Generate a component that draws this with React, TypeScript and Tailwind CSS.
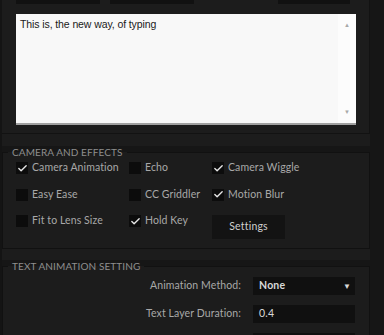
import { Check } from 'lucide-react';

const UI_FONT = "font-['Lato',sans-serif]";

function Box({ checked }: { checked?: boolean }) {
  return (
    <span className="flex h-[12px] w-[12px] shrink-0 items-center justify-center bg-[#0c0c0c]">
      {checked && <Check size={11} strokeWidth={3} className="text-[#e6e6e6]" />}
    </span>
  );
}

function Toggle({ label, checked }: { label: string; checked?: boolean }) {
  return (
    <div className="flex h-[26.5px] items-center gap-[4px]">
      <Box checked={checked} />
      <span className="whitespace-nowrap text-[10.5px] tracking-[0.1px] text-[#a8a8a8]">{label}</span>
    </div>
  );
}

function Field({ label, children }: { label: string; children: React.ReactNode }) {
  return (
    <div className="flex items-center">
      <span className="w-[238px] whitespace-nowrap text-right text-[10.5px] tracking-[0.1px] text-[#a8a8a8]">{label}</span>
      <div className="ml-[12px] flex h-[18px] w-[102px] items-center bg-[#101010] pl-[6px] pr-[4px] text-[10.5px] tracking-[0.2px] text-[#d8d8d8]">
        {children}
      </div>
    </div>
  );
}

export default function App() {
  return (
    <div className={`h-[335px] w-[384px] overflow-hidden bg-[#161616] ${UI_FONT}`}>
      <div className="flex w-[370px]">
        <div className="w-[2px] bg-[#141414]" />
        <div className="flex-1">
          {/* text panel */}
          <div className="h-[134px] border-b border-r border-[#121212] bg-[#1c1c1c]">
            <div className="flex h-[4px] pl-[14px]">
              <div className="w-[84px] bg-[#111]" />
              <div className="ml-[10px] w-[84px] bg-[#111]" />
              <div className="ml-[84px] w-[72px] bg-[#111]" />
            </div>
            <div className="ml-[14px] mt-[10px] flex h-[111px] w-[340px] border-b-2 border-[#a0a0a0] bg-[#f8f8f8]">
              <div className="flex-1 px-[4px] pt-[3px] font-['Liberation_Sans',sans-serif] text-[10.5px] tracking-[-0.1px] text-[#1a1a1a]">
                This is, the new way, of typing
              </div>
              <div className="flex w-[18px] flex-col items-center justify-between bg-[#fcfcfc] py-[8px]">
                <span className="text-[6px] leading-none text-[#a8a8a8]">▲</span>
                <span className="text-[6px] leading-none text-[#a8a8a8]">▼</span>
              </div>
            </div>
          </div>

          <div className="h-[12px] bg-[#1c1c1c]" />

          {/* camera and effects */}
          <fieldset className="h-[103px] border border-[#111] bg-[#1c1c1c]">
            <legend className="ml-[5px] px-[4px] text-[10px] leading-[12px] tracking-[0.1px] text-[#8e8e8e]">CAMERA AND EFFECTS</legend>
            <div className="mt-[-3px] grid grid-cols-[113px_83px_auto] pl-[13px]">
              <Toggle label="Camera Animation" checked />
              <Toggle label="Echo" />
              <Toggle label="Camera Wiggle" checked />
              <Toggle label="Easy Ease" />
              <Toggle label="CC Griddler" />
              <Toggle label="Motion Blur" checked />
              <Toggle label="Fit to Lens Size" />
              <Toggle label="Hold Key" checked />
              <div className="pt-[7px]">
                <button className="flex h-[24px] w-[73px] items-center justify-center bg-[#131313] text-[10.5px] tracking-[0.2px] text-[#cfcfcf]">
                  Settings
                </button>
              </div>
            </div>
          </fieldset>

          <div className="h-[11px] bg-[#1c1c1c]" />

          {/* text animation setting */}
          <fieldset className="h-[100px] border border-[#111] bg-[#1c1c1c]">
            <legend className="ml-[5px] px-[4px] text-[10px] leading-[12px] tracking-[0.1px] text-[#8e8e8e]">TEXT ANIMATION SETTING</legend>
            <div className="mt-[5px] flex flex-col gap-[10px]">
              <Field label="Animation Method:">
                <span className="flex-1 font-bold">None</span>
                <span className="text-[8px] text-[#d8d8d8]">▼</span>
              </Field>
              <Field label="Text Layer Duration:">
                <span>0.4</span>
              </Field>
              <Field label="">
                <span />
              </Field>
            </div>
          </fieldset>
        </div>
      </div>
    </div>
  );
}
